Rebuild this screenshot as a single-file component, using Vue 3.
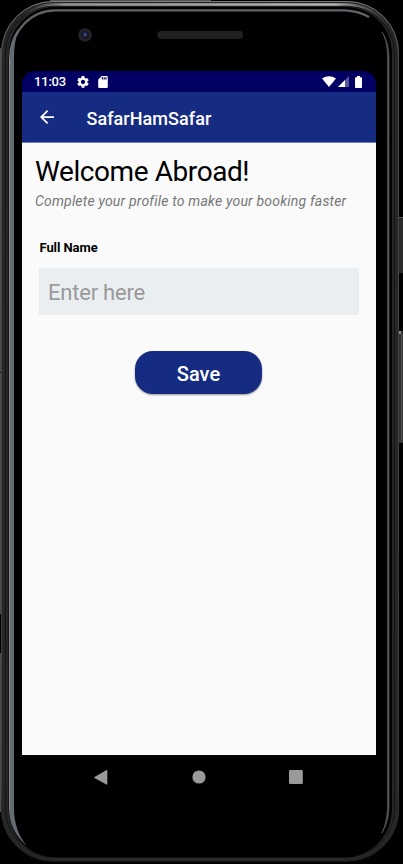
<script setup>
import { ref } from 'vue'

const fullName = ref('')
</script>

<template>
  <div class="device">
    <svg class="frame" viewBox="0 0 403 864" aria-hidden="true">
      <defs>
        <linearGradient id="rim" x1="0" y1="0" x2="0" y2="1">
          <stop offset="0" stop-color="#77797b" />
          <stop offset=".07" stop-color="#4a4a4a" />
          <stop offset=".9" stop-color="#3c3c3c" />
          <stop offset="1" stop-color="#1c1c1c" />
        </linearGradient>
        <linearGradient id="topShine" x1="0" y1="0" x2="1" y2="0">
          <stop offset="0" stop-color="#777" stop-opacity="0" />
          <stop offset=".12" stop-color="#96999b" />
          <stop offset=".85" stop-color="#b5b8ba" />
          <stop offset="1" stop-color="#777" stop-opacity="0" />
        </linearGradient>
        <pattern id="mesh" width="2" height="2" patternUnits="userSpaceOnUse">
          <rect width="2" height="2" fill="#222323" />
          <rect width="1" height="1" fill="#171818" />
        </pattern>
      </defs>
      <path d="M0 48h2v324h-2zM0 373h2v241h-2zM0 653h2v159h-2z" fill="#4b4b4b" />
      <path d="M50 0H211V2H50z" fill="#555" />
      <path d="M398 217h5v56h-5z" fill="#2b2b2b" />
      <path d="M399 217h4v1h-4z" fill="#555" />
      <path d="M398 331h5v112h-5z" fill="#303030" />
      <path d="M399 331h2v3h-2z" fill="#888" />
      <path d="M401 334h1v108h-1z" fill="#555" />
      <path d="M53 1H347A52 52 0 0 1 399 53V809A52 52 0 0 1 347 861.5H53A52 52 0 0 1 1 809V53A52 52 0 0 1 53 1z" fill="#262626" />
      <path d="M53 1.5H347A51.500 51.500 0 0 1 398.500 53V809A52 52 0 0 1 347 861H53A52 52 0 0 1 1.500 809V53A51.500 51.500 0 0 1 53 1.500z" fill="none" stroke="url(#rim)" />
      <path d="M5.500 809V53A47 47 0 0 1 53 6H347A47.500 47.500 0 0 1 394.500 53V809A48 48 0 0 1 347 857H53A48 48 0 0 1 5.500 809z" fill="none" stroke="#151515" />
      <path d="M22 17Q36 4.500 54 4.500H346Q373 5 389 27" fill="none" stroke="url(#topShine)" stroke-width="2.600" />
      <path d="M54 7H346A46 46 0 0 1 392 54V808A48 48 0 0 1 345 857.500H56A47 47 0 0 1 9 809V54A46 46 0 0 1 54 7z" fill="#000" />
      <path d="M11.800 55A44 44 0 0 1 55 10.300H345Q359 11 369 17" fill="none" stroke="#626469" stroke-width="2.300" />
      <path d="M9 58Q9 42 18 29Q14 43 14 58V808Q14 831 27 846Q9 831 9 808z" fill="#646a71" />
      <path d="M9.500 58V810" stroke="#898b8d" />
      <path d="M8.500 58V810" stroke="#111" />
      <path d="M382 32Q387 40 387.500 55V807Q387 822 382 833Q389 821 389 807V55Q388 40 382 32z" fill="#515156" stroke="#515156" stroke-width=".8" />
      <path d="M54 859.500H344" stroke="#303030" />
      <circle cx="85" cy="35" r="6.800" fill="#242426" />
      <circle cx="85" cy="35" r="4" fill="#14162a" />
      <circle cx="85" cy="34.500" r="2" fill="#343e78" />
      <rect x="157.500" y="31" width="85.500" height="8" rx="3.500" fill="url(#mesh)" />
    </svg>

    <main class="screen">
      <div class="status">
        <span class="time">11:03</span>
        <svg class="gear" viewBox="2 2 20 20"><path fill="#fff" d="M19.14 12.94a7 7 0 0 0 0-1.88l2.03-1.58a.5.5 0 0 0 .12-.61l-1.92-3.32a.5.5 0 0 0-.59-.22l-2.39.96a7 7 0 0 0-1.62-.94l-.36-2.54A.5.5 0 0 0 13.93 2h-3.86a.5.5 0 0 0-.47.41l-.36 2.54a7 7 0 0 0-1.62.94l-2.39-.96a.5.5 0 0 0-.59.22L2.72 8.87a.5.5 0 0 0 .12.61l2.03 1.58a7 7 0 0 0 0 1.88l-2.03 1.58a.5.5 0 0 0-.12.61l1.92 3.32c.12.22.37.29.59.22l2.39-.96c.5.38 1.03.7 1.62.94l.36 2.54c.05.24.24.41.48.41h3.84c.24 0 .44-.17.47-.41l.36-2.54a7 7 0 0 0 1.62-.94l2.39.96c.22.08.47 0 .59-.22l1.92-3.32a.5.5 0 0 0-.12-.61zM12 15.6a3.6 3.6 0 1 1 0-7.2 3.6 3.6 0 0 1 0 7.2z" /></svg>
        <svg class="sd" viewBox="4 2 16 20"><path fill="#fff" d="M18 2h-8L4 8v12a2 2 0 0 0 2 2h12a2 2 0 0 0 2-2V4a2 2 0 0 0-2-2zm-6 6h-2V4h2zm3 0h-2V4h2zm3 0h-2V4h2z" /></svg>
        <span class="spacer"></span>
        <svg class="wifi" viewBox="0 0 14 11"><path fill="#fff" d="M0 2.6Q7-2.2 14 2.6L7 11z" /></svg>
        <svg class="signal" viewBox="0 0 11 11"><path fill="#fff" fill-opacity=".35" d="M0 11 11 0V11z" /><path fill="#fff" d="M0 11 7 4V11z" /></svg>
        <svg class="battery" viewBox="0 0 7 12"><path fill="#fff" d="M2 0h3v1.2h1.2q.8 0 .8.8v9.2q0 .8-.8.8H.8q-.8 0-.8-.8V2q0-.8.8-.8H2z" /></svg>
      </div>
      <header class="bar">
        <svg class="back" viewBox="4 4 16 16"><path fill="#fff" d="M20 11H7.83l5.59-5.59L12 4l-8 8 8 8 1.41-1.41L7.83 13H20z" /></svg>
        <span class="title">SafarHamSafar</span>
      </header>
      <section class="content">
        <h1>Welcome Abroad!</h1>
        <p>Complete your profile to make your booking faster</p>
        <label for="name">Full Name</label>
        <input id="name" v-model="fullName" placeholder="Enter here" />
        <button type="button">Save</button>
      </section>
    </main>
    <nav class="nav">
      <svg viewBox="0 0 14 15"><path fill="#9a9a9a" d="M13.3.6V14.2Q13.3 15 12.3 14.5L.5 8.1Q-.3 7.5.5 6.9L12.3.3Q13.3-.2 13.3.6z" /></svg>
      <svg viewBox="0 0 14 15"><circle cx="7" cy="7" r="6.6" fill="#9a9a9a" /></svg>
      <svg viewBox="0 0 14 15"><rect width="13.8" height="14" rx="1.2" fill="#9a9a9a" /></svg>
    </nav>
  </div>
</template>

<style>
body {
  background: #000;
}
</style>

<style scoped>
.device {
  position: relative;
  box-sizing: border-box;
  width: 403px;
  height: 864px;
  padding: 71px 27px 0 22px;
  overflow: hidden;
  background: #000;
  font-family: Roboto, sans-serif;
}
.frame {
  position: absolute;
  inset: 0;
  width: 403px;
  height: 864px;
}
.screen {
  position: relative;
  display: flex;
  flex-direction: column;
  height: 684px;
  overflow: hidden;
  border-radius: 13px 13px 0 0;
  background: linear-gradient(#000063 21px, #fafafa 21px);
}
.status {
  display: flex;
  align-items: center;
  box-sizing: border-box;
  height: 21px;
  padding: 0 13px 0 12px;
  color: #fff;
}
.time {
  width: 43px;
  font-size: 13px;
  font-weight: 500;
  letter-spacing: -0.2px;
  line-height: 21px;
}
.gear {
  width: 12px;
  height: 12px;
}
.sd {
  width: 10px;
  height: 12px;
  margin-left: 9px;
}
.spacer {
  flex: 1;
}
.wifi {
  width: 14px;
  height: 11px;
}
.signal {
  width: 11px;
  height: 11px;
  margin-left: 2px;
}
.battery {
  width: 7px;
  height: 12px;
  margin-left: 6px;
  margin-right: 1px;
}
.bar {
  display: flex;
  align-items: center;
  box-sizing: border-box;
  height: 51px;
  padding-left: 18px;
  border-bottom: 1px solid #7681b1;
  background: #152c82;
  color: #fff;
}
.back {
  width: 14px;
  height: 14px;
}
.title {
  margin-left: 32.5px;
  padding-top: 3px;
  font-size: 18px;
  font-weight: 500;
  letter-spacing: 0.05px;
  line-height: 24px;
}
.content {
  display: flex;
  flex-direction: column;
  padding: 11px 13px 0;
}
h1 {
  margin: 0;
  color: #000;
  font-size: 28px;
  font-weight: 400;
  letter-spacing: -0.42px;
  line-height: 36px;
  white-space: nowrap;
}
p {
  margin: 2px 0 0;
  color: #777;
  font-size: 14px;
  font-style: italic;
  letter-spacing: 0.19px;
  line-height: 18px;
  white-space: nowrap;
}
label {
  margin: 30px 0 0 4.5px;
  color: #000;
  font-size: 13px;
  font-weight: 700;
  letter-spacing: -0.08px;
  line-height: 16px;
}
input {
  box-sizing: border-box;
  width: 320px;
  height: 47px;
  margin: 12px 0 0 4px;
  padding: 2px 9px 0;
  border: 0;
  border-radius: 0;
  outline: 0;
  background: #eaeef1;
  color: #000;
  font-family: inherit;
  font-size: 22px;
  letter-spacing: -0.22px;
}
input::placeholder {
  color: #999;
  opacity: 1;
}
button {
  width: 127px;
  height: 43px;
  margin: 36px 0 0 100px;
  padding: 2px 0 0;
  border: 0;
  border-radius: 18px;
  background: #152c82;
  box-shadow: 0 1px 2px rgba(0, 0, 0, 0.4);
  color: #fff;
  font-family: inherit;
  font-size: 20px;
  font-weight: 500;
}
.nav {
  position: relative;
  display: flex;
  justify-content: space-between;
  padding: 15px 73px 0 72px;
}
.nav svg {
  width: 14px;
  height: 15px;
}
</style>
